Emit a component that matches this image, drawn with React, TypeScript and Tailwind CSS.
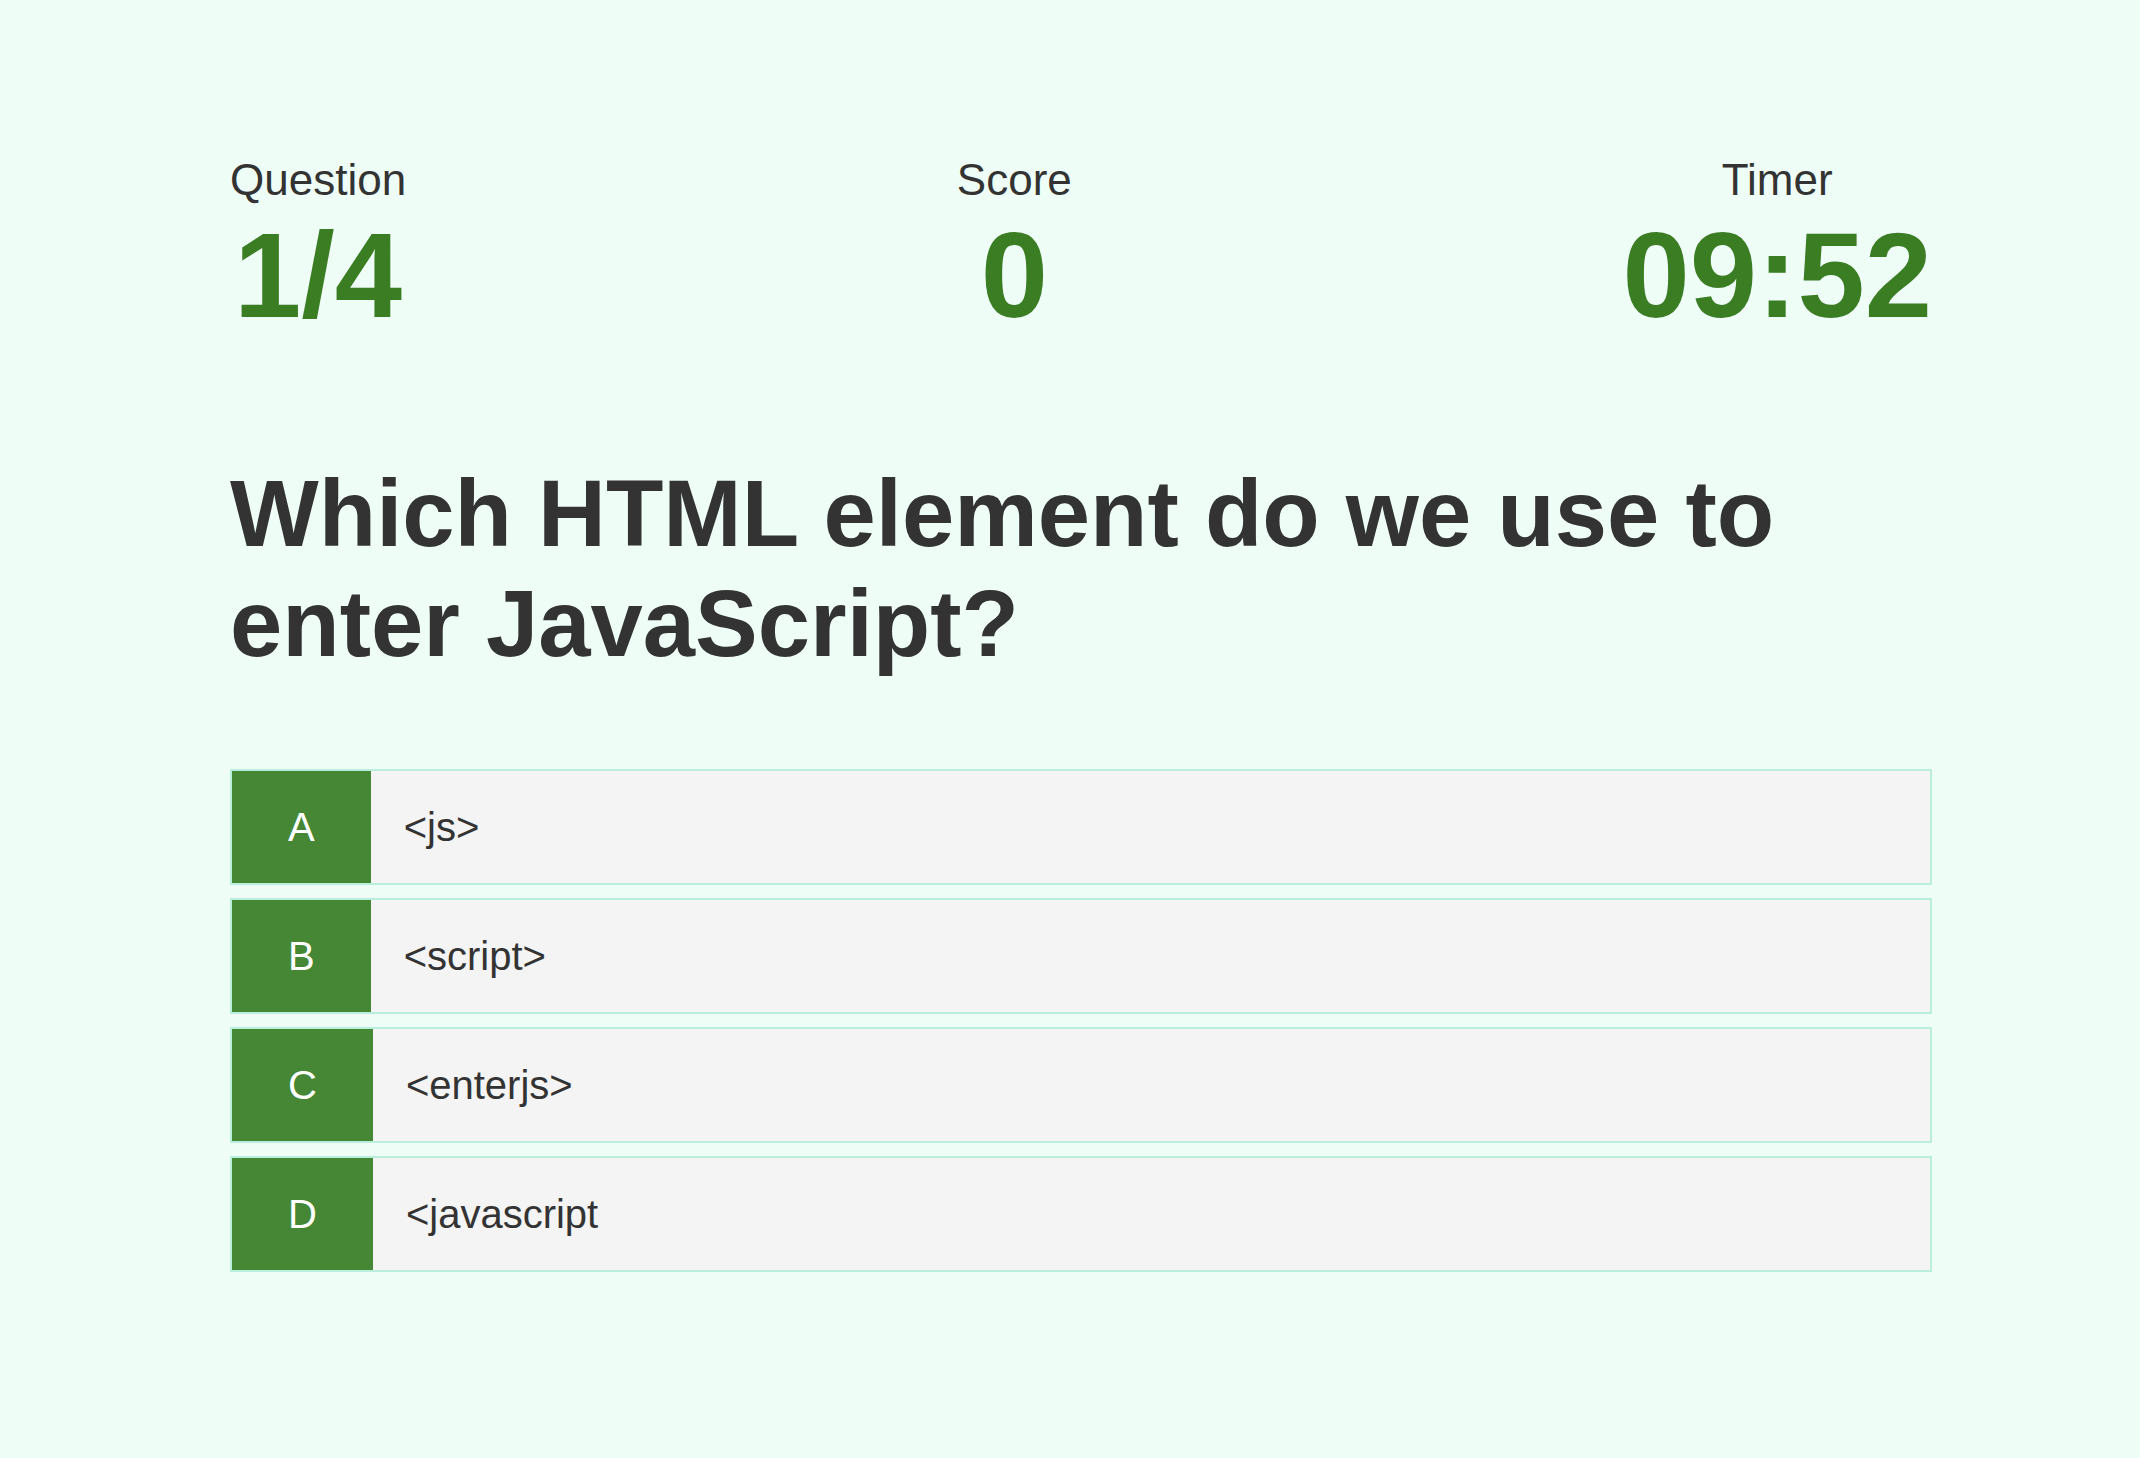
import React from 'react';

// Antwortmöglichkeiten für die aktuelle Frage
const choices = [
  { prefix: 'A', text: '<js>' },
  { prefix: 'B', text: '<script>' },
  { prefix: 'C', text: '<enterjs>' },
  { prefix: 'D', text: '<javascript' },
];

function HudItem({ label, value }: { label: string; value: string }) {
  return (
    <div className="flex flex-col items-center text-center">
      <p className="text-[44px] leading-[50px] text-[#333333]">{label}</p>
      <h1 className="text-[121px] leading-[140px] font-bold text-[#3a7d23]">{value}</h1>
    </div>
  );
}

export default function App() {
  return (
    <div
      className="min-h-screen w-full bg-[#effdf7] pt-[155px] pb-[180px] pl-[230px] pr-[208px]"
      style={{ fontFamily: '"Liberation Sans", Arial, Helvetica, sans-serif' }}
    >
      <div className="w-full flex flex-col">
        <div className="flex justify-between items-start">
          <HudItem label="Question" value="1/4" />
          <HudItem label="Score" value="0" />
          <HudItem label="Timer" value="09:52" />
        </div>

        <h2 className="mt-[114px] text-[94px] leading-[110px] font-bold text-[#333333] pr-[60px]">
          Which HTML element do we use to enter JavaScript?
        </h2>

        <div className="mt-[90px] flex flex-col gap-[13px]">
          {choices.map((choice) => (
            <div
              key={choice.prefix}
              className="h-[116px] flex border-2 border-[#b9eedc] bg-[#f4f4f4] cursor-pointer"
            >
              <p className="px-[56px] flex items-center bg-[#458735] text-white text-[40px]">
                {choice.prefix}
              </p>
              <p className="pl-[33px] flex items-center text-[40px] text-[#333333]">
                {choice.text}
              </p>
            </div>
          ))}
        </div>
      </div>
    </div>
  );
}
